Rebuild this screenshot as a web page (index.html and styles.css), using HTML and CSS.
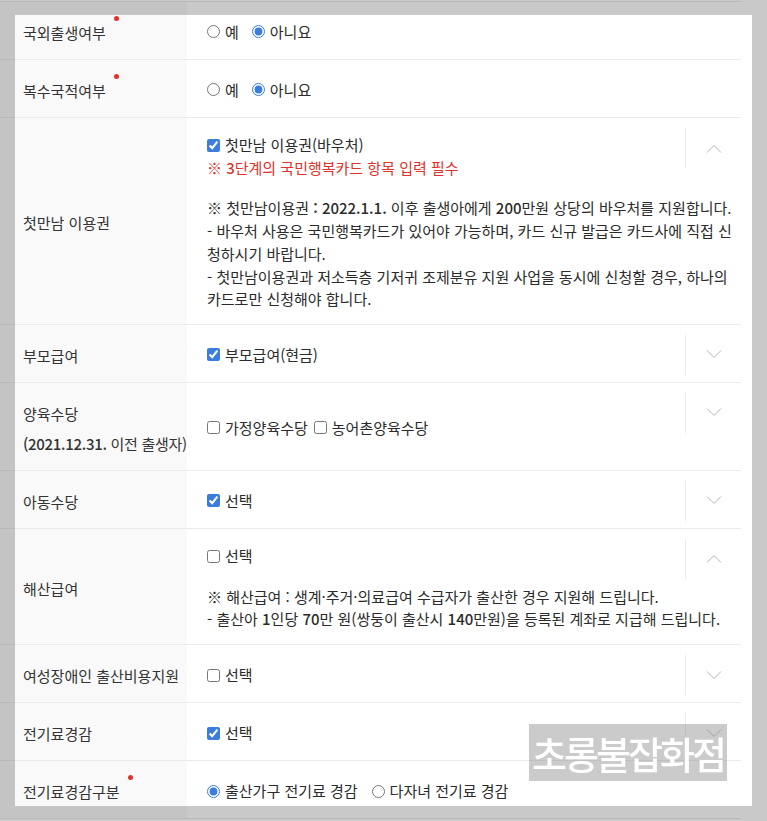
FILE: index.html
```html
<!doctype html>
<html lang="ko">
  <head>
    <meta charset="UTF-8" />
    <meta name="viewport" content="width=device-width, initial-scale=1.0" />
    <title>출산 지원 서비스 신청</title>
    <link rel="stylesheet" href="styles.css">
  </head>
  <body>
    <div class="form-table">
      <div class="form-row">
        <div class="form-label"><span class="req">국외출생여부</span></div>
        <div class="form-value">
          <div class="choice-group">
            <label class="choice"><input type="radio" name="abroad"> 예</label>
            <label class="choice"><input type="radio" name="abroad" checked> 아니요</label>
          </div>
        </div>
      </div>

      <div class="form-row">
        <div class="form-label"><span class="req">복수국적여부</span></div>
        <div class="form-value">
          <div class="choice-group">
            <label class="choice"><input type="radio" name="dual"> 예</label>
            <label class="choice"><input type="radio" name="dual" checked> 아니요</label>
          </div>
        </div>
      </div>

      <div class="form-row">
        <div class="form-label">첫만남 이용권</div>
        <div class="form-value">
          <label class="choice"><input type="checkbox" checked> 첫만남 이용권(바우처)</label>
          <p class="note-red">※ <b>3</b>단계의 국민행복카드 항목 입력 필수</p>
          <p class="desc">
            ※ 첫만남이용권 <b>: 2022.1.1.</b> 이후 출생아에게 <b>200</b>만원 상당의 바우처를 지원합니다.<br>
            - 바우처 사용은 국민행복카드가 있어야 가능하며, 카드 신규 발급은 카드사에 직접 신청하시기 바랍니다.<br>
            - 첫만남이용권과 저소득층 기저귀 조제분유 지원 사업을 동시에 신청할 경우, 하나의 카드로만 신청해야 합니다.
          </p>
          <button class="toggle" type="button" aria-label="접기">
            <svg width="16" height="9" viewBox="0 0 16 9"><polyline points="1,8.5 8,1.5 15,8.5" /></svg>
          </button>
        </div>
      </div>

      <div class="form-row">
        <div class="form-label">부모급여</div>
        <div class="form-value">
          <label class="choice"><input type="checkbox" checked> 부모급여(현금)</label>
          <button class="toggle" type="button" aria-label="펼치기">
            <svg width="16" height="9" viewBox="0 0 16 9"><polyline points="1,0.5 8,7.5 15,0.5" /></svg>
          </button>
        </div>
      </div>

      <div class="form-row">
        <div class="form-label">양육수당<br><span class="sub"><b>(2021.12.31.</b> 이전 출생자)</span></div>
        <div class="form-value">
          <div class="choice-group tight">
            <label class="choice"><input type="checkbox"> 가정양육수당</label>
            <label class="choice"><input type="checkbox"> 농어촌양육수당</label>
          </div>
          <button class="toggle" type="button" aria-label="펼치기">
            <svg width="16" height="9" viewBox="0 0 16 9"><polyline points="1,0.5 8,7.5 15,0.5" /></svg>
          </button>
        </div>
      </div>

      <div class="form-row">
        <div class="form-label">아동수당</div>
        <div class="form-value">
          <label class="choice"><input type="checkbox" checked> 선택</label>
          <button class="toggle" type="button" aria-label="펼치기">
            <svg width="16" height="9" viewBox="0 0 16 9"><polyline points="1,0.5 8,7.5 15,0.5" /></svg>
          </button>
        </div>
      </div>

      <div class="form-row">
        <div class="form-label">해산급여</div>
        <div class="form-value">
          <label class="choice"><input type="checkbox"> 선택</label>
          <p class="desc">
            ※ 해산급여 : 생계·주거·의료급여 수급자가 출산한 경우 지원해 드립니다.<br>
            - 출산아 <b>1</b>인당 <b>70</b>만 원(쌍둥이 출산시 <b>140</b>만원)을 등록된 계좌로 지급해 드립니다.
          </p>
          <button class="toggle" type="button" aria-label="접기">
            <svg width="16" height="9" viewBox="0 0 16 9"><polyline points="1,8.5 8,1.5 15,8.5" /></svg>
          </button>
        </div>
      </div>

      <div class="form-row">
        <div class="form-label">여성장애인 출산비용지원</div>
        <div class="form-value">
          <label class="choice"><input type="checkbox"> 선택</label>
          <button class="toggle" type="button" aria-label="펼치기">
            <svg width="16" height="9" viewBox="0 0 16 9"><polyline points="1,0.5 8,7.5 15,0.5" /></svg>
          </button>
        </div>
      </div>

      <div class="form-row">
        <div class="form-label">전기료경감</div>
        <div class="form-value">
          <label class="choice"><input type="checkbox" checked> 선택</label>
          <button class="toggle" type="button" aria-label="펼치기">
            <svg width="16" height="9" viewBox="0 0 16 9"><polyline points="1,0.5 8,7.5 15,0.5" /></svg>
          </button>
        </div>
      </div>

      <div class="form-row">
        <div class="form-label"><span class="req">전기료경감구분</span></div>
        <div class="form-value">
          <div class="choice-group wide">
            <label class="choice"><input type="radio" name="elec" checked> 출산가구 전기료 경감</label>
            <label class="choice"><input type="radio" name="elec"> 다자녀 전기료 경감</label>
          </div>
        </div>
      </div>
    </div>

    <div class="watermark">초롱불잡화점</div>
    <div class="capture-frame"></div>
  </body>
</html>
```

FILE: styles.css
```css
:root {
  --color-text: #2b2b2b;
  --color-label-bg: #f9f9f9;
  --color-line: #ebebeb;
  --color-red: #e0312b;
  --color-accent: #3b7ddd;
  --font-ko: "Noto Sans CJK KR", "Noto Sans", sans-serif;
}

body {
  margin: 0;
  background: #fff;
  font-family: var(--font-ko);
  font-size: 15px;
  color: var(--color-text);
}

b {
  font-weight: 500;
}

.form-table {
  width: 741px;
  margin-top: 1px;
  border-top: 1px solid var(--color-line);
}

.form-row {
  display: grid;
  grid-template-columns: 187px 1fr;
  border-bottom: 1px solid var(--color-line);
}

.form-label {
  display: flex;
  flex-direction: column;
  justify-content: center;
  padding: 16px 0 11px 23px;
  background: var(--color-label-bg);
  line-height: 30px;
  white-space: nowrap;
  color: #333;
}

.form-label .sub {
  letter-spacing: -0.3px;
}

.req {
  position: relative;
  align-self: flex-start;
}

.req::after {
  content: "";
  position: absolute;
  top: -2px;
  right: -13px;
  width: 5px;
  height: 5px;
  border-radius: 50%;
  background: var(--color-red);
}

.form-value {
  position: relative;
  display: flex;
  flex-direction: column;
  justify-content: center;
  padding: 16px 2px 13px 20px;
  line-height: 22.7px;
  word-break: break-all;
}

.form-value p {
  margin: 0;
}

.choice-group {
  display: flex;
  gap: 13px;
}

.choice-group.tight {
  gap: 6px;
}

.choice-group.wide {
  gap: 14px;
}

.choice {
  display: flex;
  align-items: center;
  gap: 4px;
}

.choice input {
  width: 13px;
  height: 13px;
  margin: 0 1px 0 0;
  accent-color: var(--color-accent);
}

.note-red {
  color: var(--color-red);
}

.desc {
  margin-top: 18px !important;
}

.toggle {
  position: absolute;
  top: 10px;
  right: 0;
  width: 56px;
  height: 40px;
  padding: 0;
  display: flex;
  align-items: center;
  justify-content: center;
  background: transparent;
  border: none;
  border-left: 1px solid #ececec;
  cursor: pointer;
}

.toggle polyline {
  fill: none;
  stroke: #b3b3b3;
  stroke-width: 1;
}

.watermark {
  position: fixed;
  left: 529px;
  top: 724px;
  width: 198px;
  height: 57px;
  display: flex;
  align-items: center;
  justify-content: center;
  background: rgba(140, 140, 140, 0.45);
  color: #fff;
  font-size: 38px;
  font-weight: 500;
  letter-spacing: -3px;
  line-height: 1;
}

.capture-frame {
  position: fixed;
  inset: 0;
  border: 15px solid rgba(0, 0, 0, 0.21);
  pointer-events: none;
}
```
